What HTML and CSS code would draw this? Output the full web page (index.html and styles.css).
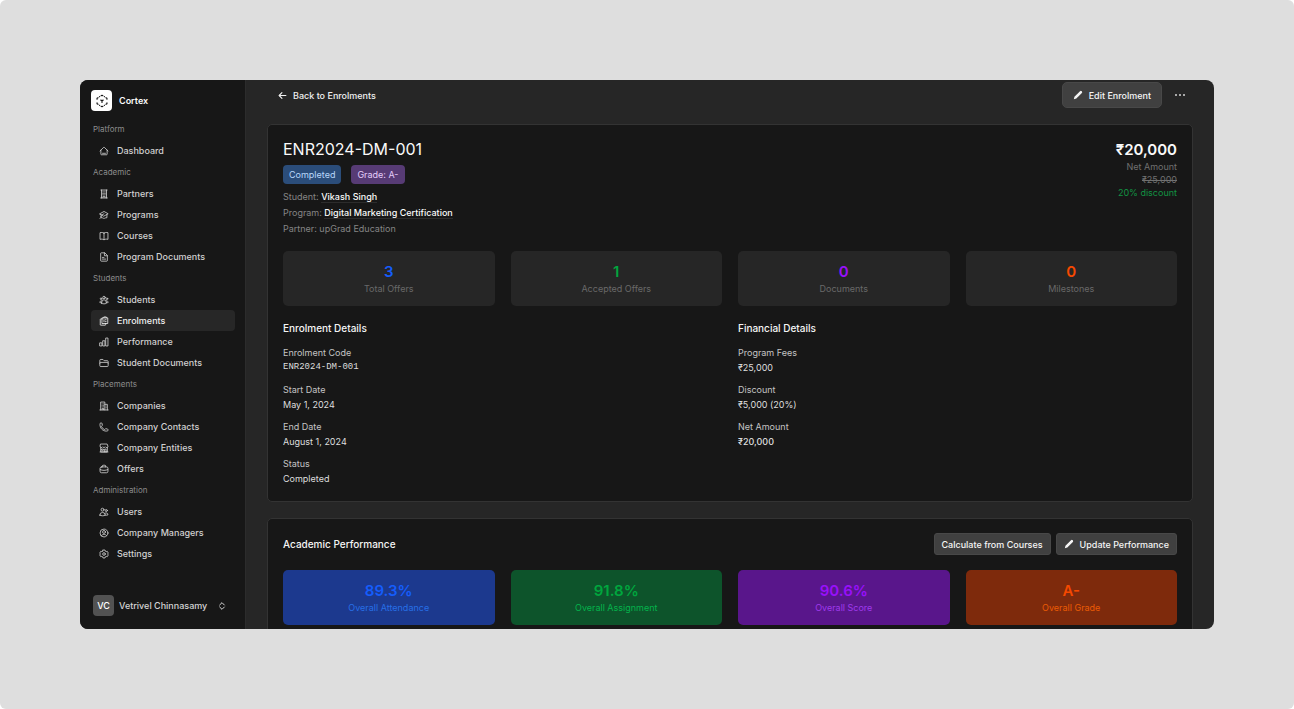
FILE: index.html
```html
<!DOCTYPE html>
<html lang="en">
<head>
<meta charset="utf-8">
<meta name="viewport" content="width=device-width, initial-scale=1">
<title>Cortex – ENR2024-DM-001</title>
<link rel="stylesheet" href="styles.css">
</head>
<body>
<svg class="sprite" aria-hidden="true">
  <symbol id="home" viewBox="0 0 24 24"><path d="M2.5 12 11.2 3.2a1.1 1.1 0 0 1 1.6 0L21.5 12M4.5 10v9.900c0 .6.5 1.100 1.100 1.100h12.800c.6 0 1.100-.5 1.100-1.100V10M8.500 17.500h7"/></symbol>
  <symbol id="building" viewBox="0 0 24 24"><path d="M4 21.500h16M4.500 2.500h15M6 2.500v19M18 2.500v19M9 7h1.500M9 10.500h1.500M9 14h1.500M13.500 7H15M13.500 10.500H15M13.500 14H15M9.500 21v-3.500h5V21"/></symbol>
  <symbol id="cap" viewBox="0 0 24 24"><path d="M2 9 12 3.500 22 9l-10 5.500zM5 11v7.500c4 0 5.500 1 7 2.500 1.500-1.500 3-2.500 7-2.500V11M2.500 20.500c1.500-1.200 2.500-3 2.500-5M12 9l-5 3"/></symbol>
  <symbol id="book" viewBox="0 0 24 24"><path d="M12 5C9.500 3.500 6 3 2.500 4v16c3.500-1 7-.5 9.500 1 2.500-1.500 6-2 9.500-1V4C18 3 14.500 3.500 12 5zM12 5v16"/></symbol>
  <symbol id="document" viewBox="0 0 24 24"><path d="M13 2H5.200C4.500 2 4 2.500 4 3.200v17.600c0 .7.500 1.200 1.200 1.200h13.600c.7 0 1.200-.5 1.200-1.200V9zM13 2v7h7M8 13h4M8 17h8"/></symbol>
  <symbol id="group" viewBox="0 0 24 24"><circle cx="12" cy="6" r="3"/><circle cx="5" cy="9" r="2"/><circle cx="19" cy="9" r="2"/><path d="M6.500 20v-3a5.500 5.500 0 0 1 11 0v3c-3.500 1.700-7.500 1.700-11 0zM6.500 18.500c-1.600.2-3.200 0-4.500-.5 0-2.500 1.500-4.500 5-4M17.500 18.500c1.600.2 3.200 0 4.500-.5 0-2.500-1.500-4.500-5-4"/></symbol>
  <symbol id="clipboard" viewBox="0 0 24 24"><path d="M8 7H4c-.6 0-1 .4-1 1v13c0 .6.400 1 1 1h11c.6 0 1-.4 1-1v-3M8 4.500h13V18H8zM11.500 4.500V2.300h6v2.200M12 9v5M15.500 9H17M15.500 13.500H17"/></symbol>
  <symbol id="chart" viewBox="0 0 24 24"><path d="M2.500 14H7v7.500H2.500zM9.800 9h4.400v12.500H9.800zM17 2.500h4.500v19H17z"/></symbol>
  <symbol id="folder" viewBox="0 0 24 24"><path d="M2 13V5.500a2 2 0 0 1 2-2h5.500l3 3H20a2 2 0 0 1 2 2v10a2 2 0 0 1-2 2H4a2 2 0 0 1-2-2v-6a2 2 0 0 1 2-2h16a2 2 0 0 1 2 2"/></symbol>
  <symbol id="office" viewBox="0 0 24 24"><path d="M2 21.500h20M4 21.500v-19h10v19M14 8h6v13.500M7.500 7v0M10.500 7v0M7.500 10.500v0M10.500 10.500v0M7.500 14v0M10.500 14v0M7.500 21v-3.500h3.500V21M17 12v0M17 16v0"/></symbol>
  <symbol id="phone" viewBox="0 0 24 24"><path d="M2.300 6.800c0 8.200 6.700 15 15 15h2.200c1.200 0 2.200-1 2.200-2.300v-1.300c0-.5-.3-1-.8-1.100l-4.500-1.100c-.4-.1-.9 0-1.100.4l-1 1.300c-.3.4-.8.500-1.200.4a12 12 0 0 1-7.100-7.200c-.2-.4 0-.9.400-1.200l1.300-1c.3-.2.500-.7.400-1.100L7 3.100c-.1-.5-.6-.9-1.100-.9H4.500a2.200 2.200 0 0 0-2.200 2.300z"/></symbol>
  <symbol id="store" viewBox="0 0 24 24"><path d="M4 11v10.500h16V11M2.500 21.500h19M4.500 2.500h15l2 5.500c0 4-4.700 4-6.300 1-1.200 2.500-5.200 2.500-6.400 0-1.600 3-6.300 3-6.300-1zM13.500 21v-6.500H17V21M7 14.500h3.500v3H7z"/></symbol>
  <symbol id="briefcase" viewBox="0 0 24 24"><rect x="2.500" y="7" width="19" height="14" rx="3.500"/><path d="M8 7V5a2 2 0 0 1 2-2h4a2 2 0 0 1 2 2v2M3 13.500c5.500 2.500 12.500 2.500 18 0"/></symbol>
  <symbol id="users" viewBox="0 0 24 24"><circle cx="8.500" cy="6.500" r="3.500"/><circle cx="17.500" cy="8.500" r="2.500"/><path d="M2 19.500a6.500 6.500 0 0 1 13 0c-4 2.200-9 2.200-13 0zM15 19.700c2.500.4 4.700 0 6.500-.9 0-4.500-4.500-6-7.500-3.500"/></symbol>
  <symbol id="person" viewBox="0 0 24 24"><circle cx="12" cy="12" r="9.500"/><circle cx="12" cy="9.500" r="3.500"/><path d="M5.500 18.500c3-4.500 10-4.500 13 0"/></symbol>
  <symbol id="gear" viewBox="0 0 24 24"><path d="M9.500 2.500h5l.7 2.800 2 1.100 2.700-.8 2.400 4.200-2 2.200 2 2.200-2.400 4.200-2.700-.8-2 1.100-.7 2.800h-5l-.7-2.800-2-1.100-2.700.8-2.400-4.200 2-2.200-2-2.200 2.400-4.200 2.700.8 2-1.100z"/><circle cx="12" cy="12" r="3.200"/></symbol>
  <symbol id="arrow-left" viewBox="0 0 24 24"><path d="M21 12H3M10.500 4.500 3 12l7.500 7.500"/></symbol>
  <symbol id="pencil" viewBox="0 0 24 24"><path class="solid" d="m2 22 1.500-6L16.800 2.700a3.200 3.200 0 0 1 4.500 4.500L8 20.500z"/></symbol>
  <symbol id="chevrons" viewBox="0 0 24 24"><path d="m5 9 7-7 7 7M5 15l7 7 7-7"/></symbol>
  <symbol id="logo" viewBox="0 0 24 24"><path d="m10.500 3 1.500-.8 1.500.8M10.500 21l1.500.8 1.500-.8M3.500 9V7.300L5.200 6.300M20.500 9V7.300l-1.700-1M3.500 15v1.700l1.700 1M20.500 15v1.700l-1.700 1M10 10.500l2 1.200 2-1.200M12 12v2.500M8 4.500l-.3.200M16 4.500l.3.200M8 19.500l-.3-.2M16 19.500l.3-.2"/></symbol>
</svg>

<div class="stage">
  <div class="window">
    <aside class="sidebar">
      <a class="brand" href="#"><span class="brand-mark"><svg class="icon"><use href="#logo"/></svg></span>Cortex</a>
      <nav class="nav" aria-label="Main">
        <h2 class="nav-label">Platform</h2>
        <a class="nav-item" href="#"><svg class="icon"><use href="#home"/></svg>Dashboard</a>
        <h2 class="nav-label">Academic</h2>
        <a class="nav-item" href="#"><svg class="icon"><use href="#building"/></svg>Partners</a>
        <a class="nav-item" href="#"><svg class="icon"><use href="#cap"/></svg>Programs</a>
        <a class="nav-item" href="#"><svg class="icon"><use href="#book"/></svg>Courses</a>
        <a class="nav-item" href="#"><svg class="icon"><use href="#document"/></svg>Program Documents</a>
        <h2 class="nav-label">Students</h2>
        <a class="nav-item" href="#"><svg class="icon"><use href="#group"/></svg>Students</a>
        <a class="nav-item active" href="#" aria-current="page"><svg class="icon"><use href="#clipboard"/></svg>Enrolments</a>
        <a class="nav-item" href="#"><svg class="icon"><use href="#chart"/></svg>Performance</a>
        <a class="nav-item" href="#"><svg class="icon"><use href="#folder"/></svg>Student Documents</a>
        <h2 class="nav-label">Placements</h2>
        <a class="nav-item" href="#"><svg class="icon"><use href="#office"/></svg>Companies</a>
        <a class="nav-item" href="#"><svg class="icon"><use href="#phone"/></svg>Company Contacts</a>
        <a class="nav-item" href="#"><svg class="icon"><use href="#store"/></svg>Company Entities</a>
        <a class="nav-item" href="#"><svg class="icon"><use href="#briefcase"/></svg>Offers</a>
        <h2 class="nav-label">Administration</h2>
        <a class="nav-item" href="#"><svg class="icon"><use href="#users"/></svg>Users</a>
        <a class="nav-item" href="#"><svg class="icon"><use href="#person"/></svg>Company Managers</a>
        <a class="nav-item" href="#"><svg class="icon"><use href="#gear"/></svg>Settings</a>
      </nav>
      <button class="account" type="button"><span class="avatar">VC</span><span class="account-name">Vetrivel Chinnasamy</span><svg class="icon icon-small"><use href="#chevrons"/></svg></button>
    </aside>

    <main class="main">
      <header class="toolbar">
        <a class="back" href="#"><svg class="icon icon-bold"><use href="#arrow-left"/></svg>Back to Enrolments</a>
        <div class="toolbar-actions">
          <button class="button button-large" type="button"><svg class="icon"><use href="#pencil"/></svg>Edit Enrolment</button>
          <button class="more" type="button" aria-label="More actions"><span class="dot"></span><span class="dot"></span><span class="dot"></span></button>
        </div>
      </header>

      <section class="card">
        <div class="summary">
          <div>
            <h1 class="title">ENR2024-DM-001</h1>
            <div class="badges"><span class="badge badge-blue">Completed</span><span class="badge badge-purple">Grade: A-</span></div>
            <p class="meta">Student: <a class="meta-link" href="#">Vikash Singh</a></p>
            <p class="meta">Program: <a class="meta-link" href="#">Digital Marketing Certification</a></p>
            <p class="meta">Partner: upGrad Education</p>
          </div>
          <div class="price">
            <p class="price-total">₹20,000</p>
            <p class="price-note">Net Amount</p>
            <p class="price-note"><s>₹25,000</s></p>
            <p class="price-note price-discount">20% discount</p>
          </div>
        </div>

        <div class="stats">
          <div class="stat blue"><strong class="stat-value">3</strong><span class="stat-label">Total Offers</span></div>
          <div class="stat green"><strong class="stat-value">1</strong><span class="stat-label">Accepted Offers</span></div>
          <div class="stat purple"><strong class="stat-value">0</strong><span class="stat-label">Documents</span></div>
          <div class="stat orange"><strong class="stat-value">0</strong><span class="stat-label">Milestones</span></div>
        </div>

        <div class="details">
          <section>
            <h2 class="heading">Enrolment Details</h2>
            <dl class="fields">
              <div><dt>Enrolment Code</dt><dd class="code">ENR2024-DM-001</dd></div>
              <div><dt>Start Date</dt><dd>May 1, 2024</dd></div>
              <div><dt>End Date</dt><dd>August 1, 2024</dd></div>
              <div><dt>Status</dt><dd>Completed</dd></div>
            </dl>
          </section>
          <section>
            <h2 class="heading">Financial Details</h2>
            <dl class="fields">
              <div><dt>Program Fees</dt><dd>₹25,000</dd></div>
              <div><dt>Discount</dt><dd>₹5,000 (20%)</dd></div>
              <div><dt>Net Amount</dt><dd class="strong">₹20,000</dd></div>
            </dl>
          </section>
        </div>
      </section>

      <section class="card">
        <div class="card-header">
          <h2 class="heading">Academic Performance</h2>
          <div class="card-actions">
            <button class="button" type="button">Calculate from Courses</button>
            <button class="button" type="button"><svg class="icon"><use href="#pencil"/></svg>Update Performance</button>
          </div>
        </div>
        <div class="stats">
          <div class="stat filled blue"><strong class="stat-value">89.3%</strong><span class="stat-label">Overall Attendance</span></div>
          <div class="stat filled green"><strong class="stat-value">91.8%</strong><span class="stat-label">Overall Assignment</span></div>
          <div class="stat filled purple"><strong class="stat-value">90.6%</strong><span class="stat-label">Overall Score</span></div>
          <div class="stat filled orange"><strong class="stat-value">A-</strong><span class="stat-label">Overall Grade</span></div>
        </div>
      </section>
    </main>
  </div>
</div>
</body>
</html>
```
FILE: styles.css
```css
* { box-sizing: border-box; }

body {
  margin: 0;
  background: #fff;
  color: #e5e5e5;
  font: 9px/15px Inter, "Liberation Sans", sans-serif;
}

h1, h2, p, dl, dd { margin: 0; font: inherit; }
a { color: inherit; text-decoration: none; }
button { border: 0; padding: 0; background: none; color: inherit; font: inherit; cursor: pointer; }

.sprite { position: absolute; width: 0; height: 0; }
.icon { width: 10px; height: 10px; flex: none; fill: none; stroke: currentColor; stroke-width: 2; stroke-linecap: round; stroke-linejoin: round; }
.icon-small { width: 8px; height: 8px; stroke-width: 3; }
.icon-bold { width: 9px; height: 9px; stroke-width: 3; }
.solid { fill: currentColor; stroke: none; }

.stage { height: 100vh; min-height: 640px; padding: 80px; border-radius: 6px; background: #dedede; }
.window { display: flex; height: 100%; border-radius: 8px; overflow: hidden; background: #262626; }

/* Sidebar */
.sidebar { display: flex; flex-direction: column; flex: none; width: 166px; padding: 10px 10px 13px 11px; border-right: 1px solid #2c2c2c; background: #171717; }
.brand { display: flex; align-items: center; gap: 7px; color: #fafafa; font-weight: 600; }
.brand-mark { display: grid; place-items: center; width: 21px; height: 21px; border-radius: 4px; background: #fff; color: #171717; }
.brand-mark .icon { width: 14px; height: 14px; }
.nav { display: flex; flex-direction: column; margin-top: 7px; }
.nav-label { padding-left: 2px; color: #8c8c8c; font-size: 8px; line-height: 22px; }
.nav-item { display: flex; align-items: center; gap: 8px; height: 21px; padding-left: 8px; border-radius: 4px; color: #d0d0d0; font-weight: 500; }
.nav-item.active { background: #272727; color: #f0f0f0; }
.account { display: flex; align-items: center; gap: 5px; margin-top: auto; padding: 0 9px 0 2px; color: #d4d4d4; font-weight: 500; }
.avatar { width: 21px; border-radius: 4px; background: #525252; color: #fff; line-height: 21px; }
.account-name { flex: 1; text-align: left; }

/* Main column */
.main { display: flex; flex-direction: column; gap: 16px; flex: 1; min-width: 0; padding: 2px 21px 0; }
.toolbar { display: flex; justify-content: space-between; align-items: center; flex: none; }
.back { display: flex; align-items: center; gap: 6px; padding-left: 11px; color: #f0f0f0; font-weight: 500; }
.toolbar-actions { display: flex; align-items: center; gap: 13px; }
.more { display: flex; gap: 2px; margin-right: 8px; }
.dot { width: 2px; height: 2px; border-radius: 50%; background: #d4d4d4; }

.button { display: flex; align-items: center; gap: 6px; height: 22px; padding: 0 7px; border: 1px solid #484848; border-radius: 3px; background: #404040; color: #f5f5f5; font-weight: 500; }
.button-large { height: 26px; padding: 0 10px; border-radius: 5px; }

.card { flex: none; padding: 14px 15px 15px; border: 1px solid #333; border-radius: 5px; background: #171717; }
.summary { display: flex; justify-content: space-between; }
.title { color: #fafafa; font-size: 16px; line-height: 20px; }
.badges { display: flex; gap: 10px; margin: 6px 0 5px; }
.badge { padding: 2px 6px; border-radius: 4px; }
.badge-blue { background: #2b4d7a; color: #b9d8fb; }
.badge-purple { background: #573b75; color: #e5ccfa; }
.meta { color: #858585; line-height: 16px; }
.meta-link { border-bottom: 1px solid #2c2c2c; color: #fafafa; font-weight: 500; }
.price { text-align: right; }
.price-total { color: #fafafa; font-size: 15px; font-weight: 600; line-height: 21px; }
.price-note { color: #707070; line-height: 13px; }
.price-discount { color: #129343; }

.stats { display: grid; grid-template-columns: repeat(4, 1fr); gap: 16px; }
.stat { display: flex; flex-direction: column; align-items: center; padding: 11px 8px 10px; border-radius: 5px; background: #262626; }
.stat-value { font-size: 15px; font-weight: 600; line-height: 20px; }
.stat-label { line-height: 14px; color: #696969; }
.blue { color: #155dfc; }
.green { color: #00a63e; }
.purple { color: #9810fa; }
.orange { color: #f54900; }
.filled.blue { background: #1c398e; }
.filled.green { background: #0d542b; }
.filled.purple { background: #59168b; }
.filled.orange { background: #7e2a0c; }
.filled.blue .stat-label { color: #276fe6; }
.filled.green .stat-label { color: #04b34b; }
.filled.purple .stat-label { color: #9f3aec; }
.filled.orange .stat-label { color: #ea5b05; }

.summary + .stats { margin-top: 14px; }
.details { display: grid; grid-template-columns: 1fr 1fr; gap: 16px; margin-top: 15px; }
.heading { color: #f5f5f5; font-size: 10px; font-weight: 500; }
.fields { display: grid; gap: 7px; margin-top: 9px; }
.fields dt { color: #c4c4c4; }
.fields dd { color: #dedede; }
.fields .strong { font-weight: 500; }
.fields .code { font-family: "Liberation Mono", monospace; }
.card-header { display: flex; justify-content: space-between; align-items: center; margin-bottom: 15px; }
.card-actions { display: flex; gap: 5px; }
```
